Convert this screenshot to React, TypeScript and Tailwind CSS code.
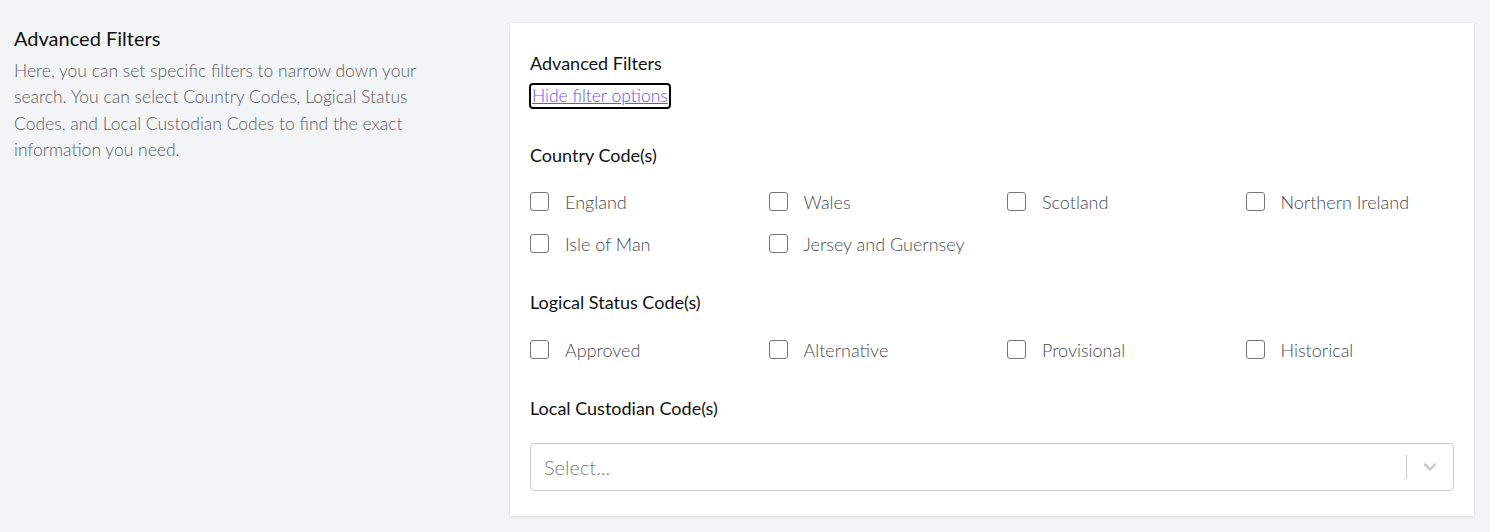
import { ChevronDown } from 'lucide-react';

const countries = ['England', 'Wales', 'Scotland', 'Northern Ireland', 'Isle of Man', 'Jersey and Guernsey'];
const statuses = ['Approved', 'Alternative', 'Provisional', 'Historical'];

function CheckboxGrid({ items }: { items: string[] }) {
    return (
        <div className="grid grid-cols-4 gap-x-[30px] gap-y-[23px]">
            {items.map((label) => (
                <label key={label} className="flex items-center gap-4 h-[19px] cursor-pointer">
                    <span className="w-[19px] h-[19px] rounded-[3px] border border-[#767676] bg-white shrink-0" />
                    <span className="text-[18px] font-light text-[#4a4a55] leading-none">{label}</span>
                </label>
            ))}
        </div>
    );
}

export default function App() {
    return (
        <div className="min-h-[532px] bg-[#f3f4f6] flex pt-[23px] pr-4 pl-[14px] font-['Lato','Liberation_Sans',sans-serif]">
            <div className="w-[496px] shrink-0 pt-[2px]">
                <h2 className="text-[20px] leading-[26px] text-[#111]">Advanced Filters</h2>
                <p className="mt-[7px] w-[425px] text-[17.5px] font-light leading-[26.3px] text-[#5c5c66]">
                    Here, you can set specific filters to narrow down your search. You can select Country Codes, Logical Status Codes, and Local Custodian Codes to find the exact information you need.
                </p>
            </div>

            <div className="flex-1 bg-white shadow-[0_1px_3px_rgba(0,0,0,0.12)] px-5 pt-[28px] pb-[25px] self-start">
                <h3 className="text-[18px] leading-6 text-[#111]">Advanced Filters</h3>
                <a
                    href="#"
                    className="inline-block mt-2 -ml-[1px] px-[1px] border-2 border-black rounded-[4px] text-[17.5px] font-light leading-[22px] text-[#6a4df5] underline"
                >
                    Hide filter options
                </a>

                <h4 className="mt-[34px] text-[18px] leading-6 text-[#111]">Country Code(s)</h4>
                <div className="mt-[25px]">
                    <CheckboxGrid items={countries} />
                </div>

                <h4 className="mt-[37px] text-[18px] leading-6 text-[#111]">Logical Status Code(s)</h4>
                <div className="mt-[26px]">
                    <CheckboxGrid items={statuses} />
                </div>

                <h4 className="mt-[37px] text-[18px] leading-6 text-[#111]">Local Custodian Code(s)</h4>
                <div className="mt-[23px] h-12 flex items-center border border-[#cccccc] rounded-[4px] pl-[13px]">
                    <span className="flex-1 text-[20px] font-light text-[#808080]">Select...</span>
                    <span className="w-px h-6 bg-[#cccccc]" />
                    <span className="w-[46px] flex items-center justify-center text-[#cccccc]">
                        <ChevronDown className="w-5 h-5" strokeWidth={3} />
                    </span>
                </div>
            </div>
        </div>
    );
}
